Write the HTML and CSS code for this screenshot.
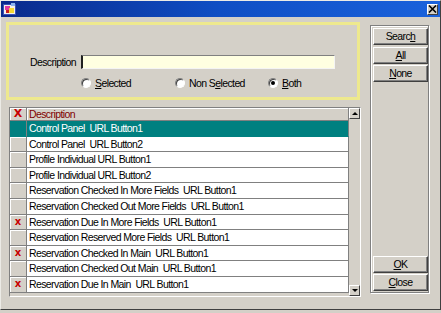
FILE: index.html
```html
<!DOCTYPE html>
<html lang="en">
<head>
    <meta charset="UTF-8">
    <title>URL Buttons</title>
    <link rel="stylesheet" href="styles.css">
</head>
<body>
    <div class="window">
        <div class="titlebar">
            <svg class="app-icon" width="13" height="12" viewBox="0 0 13 12">
                <rect x="0" y="1" width="13" height="11" fill="#3a4fb8"/>
                <rect x="1" y="2" width="11" height="9" fill="#f4f0e8"/>
                <rect x="2" y="3" width="5" height="4" fill="#e23ca0"/>
                <rect x="6" y="5" width="5" height="5" fill="#f6d832"/>
                <rect x="3" y="7" width="3" height="3" fill="#c81e1e"/>
                <rect x="8" y="0" width="4" height="3" fill="#8ab4f0"/>
            </svg>
            <span class="close-btn">
                <svg width="9" height="8" viewBox="0 0 9 8">
                    <path d="M1 0.5 L8 7.5 M8 0.5 L1 7.5" stroke="#000" stroke-width="1.6"/>
                </svg>
            </span>
        </div>

        <div class="content">
            <div class="left">
                <div class="filter">
                    <div class="filter-row">
                        <span class="filter-label">Description</span>
                        <div class="text-input"></div>
                    </div>
                    <div class="radio-row">
                        <span class="radio-item first"><span class="radio"></span><span><u>S</u>elected</span></span>
                        <span class="radio-item second"><span class="radio"></span><span>Non S<u>e</u>lected</span></span>
                        <span class="radio-item"><span class="radio on"></span><span><u>B</u>oth</span></span>
                    </div>
                </div>

                <div class="grid">
                    <div class="grid-body">
                        <div class="grid-row grid-head">
                            <div class="mark">X</div>
                            <div class="desc">Description</div>
                        </div>
                        <div class="grid-row selected"><div class="mark"></div><div class="desc">Control Panel&nbsp; URL Button1</div></div>
                        <div class="grid-row"><div class="mark"></div><div class="desc">Control Panel&nbsp; URL Button2</div></div>
                        <div class="grid-row"><div class="mark"></div><div class="desc">Profile Individual URL Button1</div></div>
                        <div class="grid-row"><div class="mark"></div><div class="desc">Profile Individual URL Button2</div></div>
                        <div class="grid-row"><div class="mark"></div><div class="desc">Reservation Checked In More Fields&nbsp; URL Button1</div></div>
                        <div class="grid-row"><div class="mark"></div><div class="desc">Reservation Checked Out More Fields&nbsp; URL Button1</div></div>
                        <div class="grid-row"><div class="mark">x</div><div class="desc">Reservation Due In More Fields&nbsp; URL Button1</div></div>
                        <div class="grid-row"><div class="mark"></div><div class="desc">Reservation Reserved More Fields&nbsp; URL Button1</div></div>
                        <div class="grid-row"><div class="mark">x</div><div class="desc">Reservation Checked In Main&nbsp; URL Button1</div></div>
                        <div class="grid-row"><div class="mark"></div><div class="desc">Reservation Checked Out Main&nbsp; URL Button1</div></div>
                        <div class="grid-row"><div class="mark">x</div><div class="desc">Reservation Due In Main&nbsp; URL Button1</div></div>
                    </div>
                    <div class="scrollbar">
                        <span class="sb-btn up"></span>
                        <span class="sb-btn down"></span>
                    </div>
                </div>
            </div>

            <div class="buttons">
                <div class="btn-group">
                    <div class="btn">Searc<u>h</u></div>
                    <div class="btn"><u>A</u>ll</div>
                    <div class="btn"><u>N</u>one</div>
                </div>
                <div class="btn-group">
                    <div class="btn"><u>O</u>K</div>
                    <div class="btn"><u>C</u>lose</div>
                </div>
            </div>
        </div>
    </div>
</body>
</html>
```

FILE: styles.css
```css
* {
    box-sizing: border-box;
}

body {
    margin: 0;
    background: #d4d0c8;
    font-family: "Liberation Sans", Arial, sans-serif;
    font-size: 10.5px;
    letter-spacing: -0.6px;
    color: #000;
}

.window {
    width: 441px;
    height: 310px;
    background: #d4d0c8;
    border: 1px solid;
    border-color: #ecebe6 #404040 #404040 #ecebe6;
    display: flex;
    flex-direction: column;
}

/* title bar */
.titlebar {
    height: 16px;
    background: linear-gradient(90deg, #0a2a8c 0%, #0f4ec4 50%, #1a62dc 100%);
    display: flex;
    align-items: center;
    justify-content: space-between;
    padding: 0 2px 0 2px;
}

.close-btn {
    width: 11px;
    height: 11px;
    background: #d4d0c8;
    border: 1px solid;
    border-color: #fff #404040 #404040 #fff;
    display: flex;
    align-items: center;
    justify-content: center;
}

.content {
    display: flex;
    padding: 5px 0 0 5px;
}

.left {
    width: 355px;
}

/* filter box */
.filter {
    width: 354px;
    height: 78px;
    border: 3px solid #eee98e;
    padding-top: 30px;
}

.filter-row {
    display: flex;
    align-items: center;
    gap: 5px;
    padding-left: 21px;
}

.filter-label {
    width: 46px;
    white-space: nowrap;
}

.text-input {
    width: 254px;
    height: 14px;
    background: #ffffe1;
    border: 1px solid;
    border-color: #808080 #f4f4f4 #f4f4f4 #202020;
    border-left-width: 2px;
}

.radio-row {
    display: flex;
    align-items: center;
    margin-top: 8px;
    padding-left: 72px;
}

.radio-item {
    display: flex;
    align-items: center;
    gap: 4px;
}

.radio-item.first {
    width: 94px;
}

.radio-item.second {
    width: 93px;
}

.radio {
    width: 10px;
    height: 10px;
    border-radius: 50%;
    background: #fff;
    border: 1px solid;
    border-color: #808080 #fff #fff #808080;
    box-shadow: inset 1px 1px #404040;
    display: flex;
    align-items: center;
    justify-content: center;
}

.radio.on::after {
    content: "";
    width: 4px;
    height: 4px;
    border-radius: 50%;
    background: #000;
}

/* grid */
.grid {
    width: 352px;
    height: 190px;
    margin: 7px 0 0 3px;
    display: flex;
    border: 1px solid;
    border-color: #808080 #fff #fff #808080;
}

.grid-body {
    flex: 1;
}

.grid-row {
    display: flex;
    height: 15.6px;
}

.grid-row .mark {
    width: 17px;
    background: #d4d0c8;
    border-right: 1px solid #808080;
    border-bottom: 1px solid #808080;
    box-shadow: inset 1px 1px #fff;
    color: #c80000;
    font-family: "DejaVu Sans", sans-serif;
    font-weight: bold;
    font-size: 10px;
    letter-spacing: 0;
    text-align: center;
    line-height: 14px;
}

.grid-row .desc {
    flex: 1;
    background: #fff;
    border-right: 1px solid #808080;
    border-bottom: 1px solid #808080;
    padding-left: 2px;
    line-height: 14px;
    white-space: nowrap;
    overflow: hidden;
}

.grid-head {
    height: 13px;
}

.grid-head .mark,
.grid-head .desc {
    background: #d4d0c8;
    box-shadow: inset 1px 1px #fff;
    line-height: 12px;
}

.grid-head .mark {
    font-size: 11px;
}

.grid-head .desc {
    color: #800000;
}

.grid-row.selected .mark,
.grid-row.selected .desc {
    background: #008080;
    color: #fff;
    box-shadow: none;
    border-bottom-color: #008080;
}

.scrollbar {
    width: 11px;
    display: flex;
    flex-direction: column;
    justify-content: space-between;
    background: #d4d0c8;
}

.sb-btn {
    width: 11px;
    height: 11px;
    background: #d4d0c8;
    border: 1px solid;
    border-color: #fff #404040 #404040 #fff;
    display: flex;
    align-items: center;
    justify-content: center;
}

.sb-btn::after {
    content: "";
    border-left: 3px solid transparent;
    border-right: 3px solid transparent;
}

.sb-btn.up::after {
    border-bottom: 3px solid #000;
}

.sb-btn.down::after {
    border-top: 3px solid #000;
}

/* button panel */
.buttons {
    width: 59px;
    height: 268px;
    margin: 3px 0 0 9px;
    border: 1px solid #808080;
    box-shadow: inset 1px 1px #fff, 1px 1px #fff;
    padding: 2px 0 1px 2px;
    display: flex;
    flex-direction: column;
    justify-content: space-between;
}

.btn-group {
    display: flex;
    flex-direction: column;
    gap: 1.5px;
}

.btn {
    width: 55px;
    height: 17px;
    background: #d4d0c8;
    border: 1px solid;
    border-color: #fff #404040 #404040 #fff;
    box-shadow: inset -1px -1px #808080;
    text-align: center;
    line-height: 14px;
}
```
